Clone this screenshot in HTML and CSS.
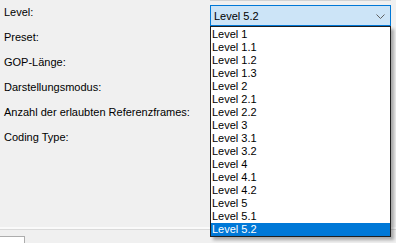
FILE: index.html
```html
<!DOCTYPE html>
<html>
<head>
<meta charset="utf-8">
<link rel="stylesheet" href="styles.css">
</head>
<body>
<div class="page">
  <div class="form">
    <div class="label">Level:</div>
    <div class="control">
      <div class="combo">
        <span class="combo-text">Level 5.2</span>
        <svg class="chev" width="9" height="5" viewBox="0 0 9 5"><polyline points="0.5,0.5 4.5,4.5 8.5,0.5" fill="none" stroke="#606060" stroke-width="1"/></svg>
      </div>
    </div>
    <div class="label">Preset:</div>
    <div class="control"></div>
    <div class="label">GOP-Länge:</div>
    <div class="control"></div>
    <div class="label">Darstellungsmodus:</div>
    <div class="control"></div>
    <div class="label">Anzahl der erlaubten Referenzframes:</div>
    <div class="control"></div>
    <div class="label">Coding Type:</div>
    <div class="control"></div>
  </div>
  <div class="sep"></div>
  <div class="tabs"><div class="tab"></div></div>

  <ul class="dropdown">
    <li>Level 1</li>
    <li>Level 1.1</li>
    <li>Level 1.2</li>
    <li>Level 1.3</li>
    <li>Level 2</li>
    <li>Level 2.1</li>
    <li>Level 2.2</li>
    <li>Level 3</li>
    <li>Level 3.1</li>
    <li>Level 3.2</li>
    <li>Level 4</li>
    <li>Level 4.1</li>
    <li>Level 4.2</li>
    <li>Level 5</li>
    <li>Level 5.1</li>
    <li class="selected">Level 5.2</li>
  </ul>
</div>
</body>
</html>
```
FILE: styles.css
```css
html, body {
  margin: 0;
  padding: 0;
  background: #f0f0f0;
}
body {
  font-family: "Liberation Sans", Arial, sans-serif;
  font-size: 11px;
  color: #000;
  overflow: hidden;
}
.page {
  position: relative;
  width: 396px;
  height: 243px;
  overflow: hidden;
}
.form {
  display: grid;
  grid-template-columns: 206px 181px;
  grid-auto-rows: 25px;
  padding: 5px 0 0 4px;
  position: relative;
}
.form::before {
  content: "";
  position: absolute;
  top: 0;
  left: 210px;
  width: 181px;
  height: 1px;
  background: #d2d2d2;
}
.label {
  padding-top: 1px;
  line-height: 13px;
  white-space: nowrap;
}
.combo {
  box-sizing: border-box;
  height: 21px;
  border: 1px solid #0078d7;
  background: #cce4f7;
  display: flex;
  align-items: center;
  justify-content: space-between;
  padding: 1px 5px 0 3px;
}
.combo-text {
  line-height: 13px;
}
.chev {
  display: block;
}
.sep {
  margin-top: 72px;
  height: 0;
  border-top: 2px solid #fafafa;
  border-bottom: 1px solid #dadada;
}
.tabs {
  padding-top: 6px;
  display: flex;
}
.tab {
  box-sizing: border-box;
  width: 26px;
  height: 20px;
  margin-left: -1px;
  background: #fff;
  border: 1px solid #adadad;
}
.dropdown {
  position: absolute;
  top: 26px;
  left: 210px;
  box-sizing: border-box;
  width: 181px;
  height: 211px;
  margin: 0;
  padding: 1px 0 0 0;
  list-style: none;
  background: #fff;
  border: 1px solid #1f1f1f;
  box-shadow: 3px 3px 3px rgba(0, 0, 0, 0.3);
}
.dropdown li {
  height: 13px;
  line-height: 13px;
  padding-left: 1px;
  white-space: nowrap;
}
.dropdown li.selected {
  background: #0078d7;
  color: #fff;
}
```
